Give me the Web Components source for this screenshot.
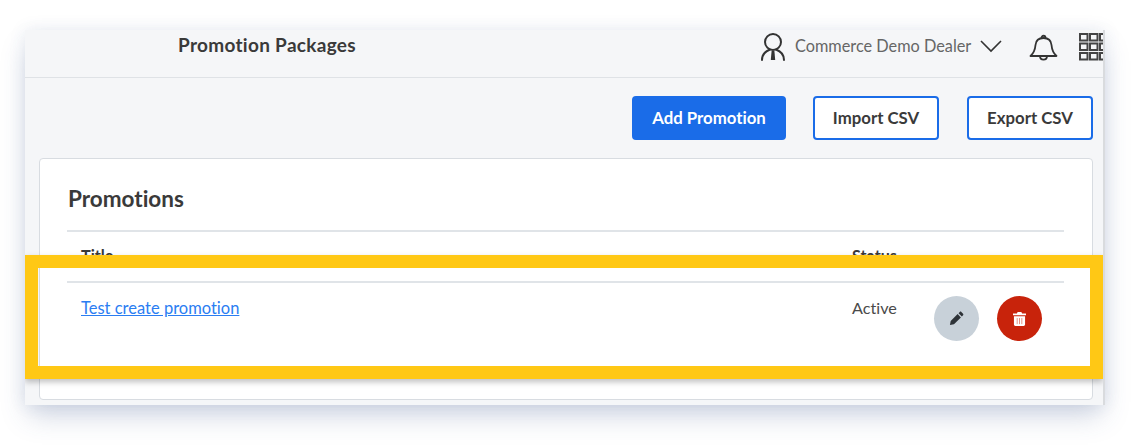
<!DOCTYPE html>
<html lang="en">
<head>
<meta charset="utf-8">
<title>Promotion Packages</title>
<style>
  html, body { margin: 0; background: #fff; }
  body { font-family: "Lato", "Open Sans", sans-serif; font-variant-ligatures: none; color: #333; }
</style>
</head>
<body>
<promo-frame>
  <promo-header slot="header" title-text="Promotion Packages" user="Commerce Demo Dealer"></promo-header>
  <promo-toolbar slot="toolbar">
    <promo-button primary>Add Promotion</promo-button>
    <promo-button>Import CSV</promo-button>
    <promo-button>Export CSV</promo-button>
  </promo-toolbar>
  <promo-card heading="Promotions">
    <promo-row head title-text="Title" status="Status"></promo-row>
    <promo-row title-text="Test create promotion" status="Active" link></promo-row>
  </promo-card>
  <highlight-box slot="overlay"></highlight-box>
</promo-frame>

<script>
class PromoFrame extends HTMLElement {
    constructor() {
        super();
        this.shadow = this.attachShadow({ mode: "open" });
    }
    connectedCallback() {
        this.shadow.innerHTML = `
            <style>
                :host { display: block; padding: 30px 26px 40px 25px; }
                .frame {
                    position: relative;
                    box-sizing: border-box;
                    height: 375px;
                    background: #f5f6f8;
                    border-right: 2px solid #d9dbde;
                    box-shadow: 0 14px 26px -4px rgba(60, 85, 140, .25), 0 0 16px rgba(60, 85, 140, .1);
                    display: flex;
                    flex-direction: column;
                    overflow: hidden;
                }
            </style>
            <div class="frame">
                <slot name="header"></slot>
                <slot name="toolbar"></slot>
                <slot></slot>
                <slot name="overlay"></slot>
            </div>
        `;
    }
}

class PromoHeader extends HTMLElement {
    constructor() {
        super();
        this.shadow = this.attachShadow({ mode: "open" });
    }
    connectedCallback() {
        this.shadow.innerHTML = `
            <style>
                :host { display: block; }
                .bar {
                    box-sizing: border-box;
                    height: 48px;
                    border-bottom: 1px solid #dfe2e6;
                    padding-left: 153px;
                    display: flex;
                    justify-content: space-between;
                    white-space: nowrap;
                }
                h1 { margin: 4px 0 0; font-size: 19px; letter-spacing: .3px; line-height: 22px; font-weight: 700; color: #3a3a3a; }
                .right { display: flex; align-items: flex-start; width: 345px; flex: none; margin-right: -1px; }
                .user-icon { margin: 3px 0 0 1px; flex: none; }
                .user { margin: 6px 0 0 9px; width: 178px; font-size: 16.3px; line-height: 20px; color: #666; }
                .chev { margin: 10px 0 0 9px; flex: none; }
                .bell { margin: 3px 0 0 27px; flex: none; }
                .apps { margin: 3px 0 0 21px; flex: none; }
            </style>
            <div class="bar">
                <h1>${this.getAttribute("title-text")}</h1>
                <div class="right">
                    <svg class="user-icon" width="26" height="28" viewBox="0 0 26 28" fill="none" stroke="#333" stroke-width="2">
                        <ellipse cx="13" cy="9" rx="8" ry="8"/>
                        <path d="M2 27c0-5.500 4-9 8-10.500M24 27c0-5.500-4-9-8-10.500" stroke-linecap="round"/>
                        <path d="M11.600 18h2.800l.8 9h-4.400z" fill="#333" stroke="none"/>
                    </svg>
                    <span class="user">${this.getAttribute("user")}</span>
                    <svg class="chev" width="22" height="13" viewBox="0 0 22 13" fill="none" stroke="#333" stroke-width="1.600">
                        <path d="M1 1l10 10L21 1"/>
                    </svg>
                    <svg class="bell" width="29" height="28" viewBox="0 0 29 28" fill="none" stroke="#333" stroke-width="1.800" stroke-linejoin="round">
                        <path d="M1.500 23c3.500-3 4.500-5.500 5-11 .4-4.500 3.500-7 8-7s7.600 2.500 8 7c.5 5.500 1.500 8 5 11z"/>
                        <path d="M12.500 5c0-3 4-3 4 0M11 23c0 4.800 7 4.800 7 0"/>
                    </svg>
                    <svg class="apps" width="30" height="28" viewBox="0 0 30 28" fill="none" stroke="#444" stroke-width="2">
                        <path d="M1 1h7.500v6.500H1zM11 1h7.500v6.500H11zM21 1h7.500v6.500H21zM1 10.500h7.500V17H1zM11 10.500h7.500V17H11zM21 10.500h7.500V17H21zM1 20h7.500v6.500H1zM11 20h7.500v6.500H11zM21 20h7.500v6.500H21z"/>
                    </svg>
                </div>
            </div>
        `;
    }
}

class PromoToolbar extends HTMLElement {
    constructor() {
        super();
        this.shadow = this.attachShadow({ mode: "open" });
    }
    connectedCallback() {
        this.shadow.innerHTML = `
            <style>
                :host {
                    display: flex;
                    justify-content: flex-end;
                    gap: 27px;
                    padding: 18px 10px 18px 0;
                }
                ::slotted(:last-child) { margin-left: 1px; }
            </style>
            <slot></slot>
        `;
    }
}

class PromoButton extends HTMLElement {
    constructor() {
        super();
        this.shadow = this.attachShadow({ mode: "open" });
    }
    connectedCallback() {
        this.shadow.innerHTML = `
            <style>
                :host {
                    display: flex;
                    align-items: center;
                    justify-content: center;
                    box-sizing: border-box;
                    width: 126px;
                    height: 44px;
                    padding-bottom: 2px;
                    background: #fff;
                    border: 2px solid #1a6ce8;
                    border-radius: 4px;
                    font-size: 16.8px;
                    font-weight: 700;
                    color: #3a3a3a;
                    white-space: nowrap;
                }
                :host([primary]) { width: 154px; background: #1a6ce8; color: #fff; }
            </style>
            <slot></slot>
        `;
    }
}

class PromoCard extends HTMLElement {
    constructor() {
        super();
        this.shadow = this.attachShadow({ mode: "open" });
    }
    connectedCallback() {
        this.shadow.innerHTML = `
            <style>
                :host {
                    display: block;
                    box-sizing: border-box;
                    height: 242px;
                    margin: 0 10px 0 14px;
                    padding: 0 28px 0 27px;
                    background: #fff;
                    border: 1px solid #d8dce1;
                    border-radius: 4px;
                }
                h2 { margin: 0; padding: 26px 0 18px 1px; font-size: 22.5px; line-height: 27px; font-weight: 700; color: #3a3a3a; }
            </style>
            <h2>${this.getAttribute("heading")}</h2>
            <slot></slot>
        `;
    }
}

class PromoRow extends HTMLElement {
    constructor() {
        super();
        this.shadow = this.attachShadow({ mode: "open" });
    }
    connectedCallback() {
        const head = this.hasAttribute("head");
        const title = this.getAttribute("title-text");
        const status = this.getAttribute("status");
        this.shadow.innerHTML = `
            <style>
                :host {
                    display: grid;
                    grid-template-columns: 771px 82px 1fr;
                    box-sizing: border-box;
                    border-top: 2px solid #e0e4e8;
                    padding: 14px 0 0 14px;
                    height: 51px;
                    font-size: 16.2px;
                    line-height: 20px;
                    color: #4a4a4a;
                }
                :host([head]) { font-weight: 700; color: #3a3a3a; }
                :host(:not([head])) { height: 70px; padding-top: 15px; }
                a { color: #2a7df2; text-decoration: underline; font-size: 16.5px; }
                .actions { display: flex; gap: 18px; margin-top: -2px; }
            </style>
            <div>${this.hasAttribute("link") ? `<a href="#">${title}</a>` : title}</div>
            <div>${status}</div>
            ${head ? "" : `
            <div class="actions">
                <icon-button kind="edit"></icon-button>
                <icon-button kind="delete"></icon-button>
            </div>`}
        `;
    }
}

class IconButton extends HTMLElement {
    constructor() {
        super();
        this.shadow = this.attachShadow({ mode: "open" });
    }
    connectedCallback() {
        const edit = this.getAttribute("kind") === "edit";
        this.shadow.innerHTML = `
            <style>
                :host {
                    display: flex;
                    align-items: center;
                    justify-content: center;
                    width: 45px;
                    height: 45px;
                    border-radius: 50%;
                    background: ${edit ? "#c8d1d9" : "#c8230b"};
                }
            </style>
            ${edit ? `
            <svg width="15" height="15" viewBox="0 0 16 16">
                <path fill="#2e3338" d="M1 15l.8-4.300 7.400-7.400 3.500 3.500-7.400 7.400zM10.200 2.300l1.300-1.300c.5-.5 1.200-.5 1.700 0l1.800 1.800c.5.5.5 1.200 0 1.700l-1.300 1.300z"/>
            </svg>` : `
            <svg width="13" height="14" viewBox="0 0 14 15">
                <path fill="#fff" d="M5 0h4l.8 1.500H14v2H0v-2h4.200zM1 4.500h12V13.500c0 .8-.7 1.500-1.500 1.500h-9C1.700 15 1 14.300 1 13.500z"/>
                <path stroke="#e58a7a" stroke-width="1" d="M4.500 6.500v6.500M7 6.500v6.500M9.500 6.500v6.500"/>
            </svg>`}
        `;
    }
}

class HighlightBox extends HTMLElement {
    constructor() {
        super();
        this.shadow = this.attachShadow({ mode: "open" });
    }
    connectedCallback() {
        this.shadow.innerHTML = `
            <style>
                :host {
                    position: absolute;
                    left: 0;
                    top: 225px;
                    box-sizing: border-box;
                    width: 1078px;
                    height: 124px;
                    border: 13px solid #ffc815;
                    box-shadow: 0 3px 6px rgba(0, 0, 0, .25);
                }
            </style>
        `;
    }
}

window.customElements.define("promo-frame", PromoFrame);
window.customElements.define("promo-header", PromoHeader);
window.customElements.define("promo-toolbar", PromoToolbar);
window.customElements.define("promo-button", PromoButton);
window.customElements.define("promo-card", PromoCard);
window.customElements.define("promo-row", PromoRow);
window.customElements.define("icon-button", IconButton);
window.customElements.define("highlight-box", HighlightBox);
</script>
</body>
</html>
